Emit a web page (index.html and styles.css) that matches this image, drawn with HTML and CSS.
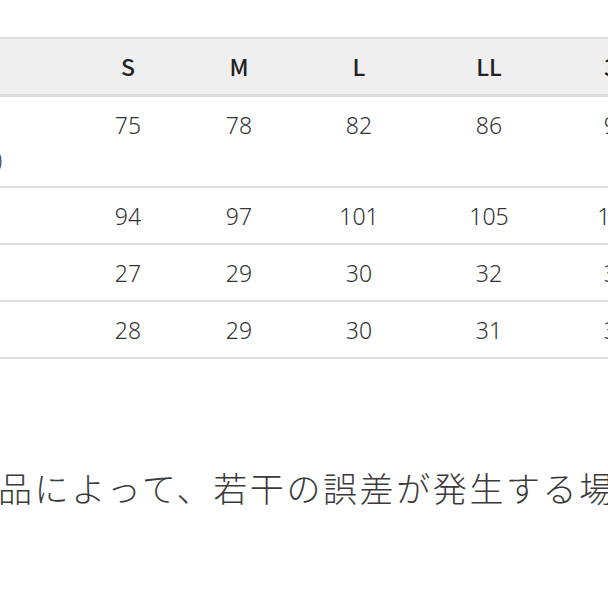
FILE: index.html
```html
<!DOCTYPE html>
<html lang="ja">
<head>
<meta charset="utf-8">
<link rel="stylesheet" href="styles.css">
</head>
<body>
<div class="page">
  <table class="size-table">
    <colgroup>
      <col class="c-label">
      <col class="c-s">
      <col class="c-m">
      <col class="c-l">
      <col class="c-ll">
      <col class="c-3l">
    </colgroup>
    <thead>
      <tr>
        <th class="label">サイズ</th>
        <th>S</th>
        <th>M</th>
        <th>L</th>
        <th>LL</th>
        <th>3L</th>
      </tr>
    </thead>
    <tbody>
      <tr>
        <td class="label">着丈<br>(後中心)</td>
        <td>75</td>
        <td>78</td>
        <td>82</td>
        <td>86</td>
        <td>90</td>
      </tr>
      <tr>
        <td class="label">身幅</td>
        <td>94</td>
        <td>97</td>
        <td>101</td>
        <td>105</td>
        <td>109</td>
      </tr>
      <tr>
        <td class="label">肩幅</td>
        <td>27</td>
        <td>29</td>
        <td>30</td>
        <td>32</td>
        <td>34</td>
      </tr>
      <tr>
        <td class="label">袖丈</td>
        <td>28</td>
        <td>29</td>
        <td>30</td>
        <td>31</td>
        <td>32</td>
      </tr>
    </tbody>
  </table>
  <p class="note">品によって、若干の誤差が発生する場合がございます。</p>
</div>
</body>
</html>
```

FILE: styles.css
```css
html, body {
  margin: 0;
  padding: 0;
  background: #ffffff;
}
body {
  width: 608px;
  height: 608px;
  overflow: hidden;
  font-family: "Noto Sans CJK JP", "Noto Sans", sans-serif;
  color: #333333;
}
.page {
  padding-top: 37px;
}
.size-table {
  margin-left: -100px;
  border-collapse: separate;
  border-spacing: 0;
  table-layout: fixed;
  width: 779px;
}
.c-label { width: 173px; }
.c-s { width: 110px; }
.c-m { width: 112px; }
.c-l { width: 128px; }
.c-ll { width: 132px; }
.c-3l { width: 124px; }

.size-table th {
  background: #efefef;
  border-top: 2px solid #dddddd;
  border-bottom: 3px solid #dadada;
  padding: 11px 0;
  line-height: 33px;
  font-size: 23px;
  font-weight: 500;
  color: #222222;
  text-align: center;
}
.size-table td {
  border-bottom: 2px solid #dddddd;
  padding: 11px 0 10px;
  line-height: 34px;
  font-family: "Noto Sans", "Noto Sans CJK JP", sans-serif;
  font-size: 23px;
  font-weight: 300;
  color: #333333;
  text-align: center;
  vertical-align: top;
}
.size-table td.label,
.size-table th.label {
  text-align: left;
  padding-left: 20px;
  white-space: nowrap;
  font-family: "Noto Sans CJK JP", sans-serif;
}
.note {
  margin: 107px 0 0 -2px;
  white-space: nowrap;
  font-size: 34px;
  letter-spacing: 2.6px;
  line-height: 44px;
  font-weight: 300;
  color: #3a3a3a;
  text-spacing-trim: space-all;
}
```
